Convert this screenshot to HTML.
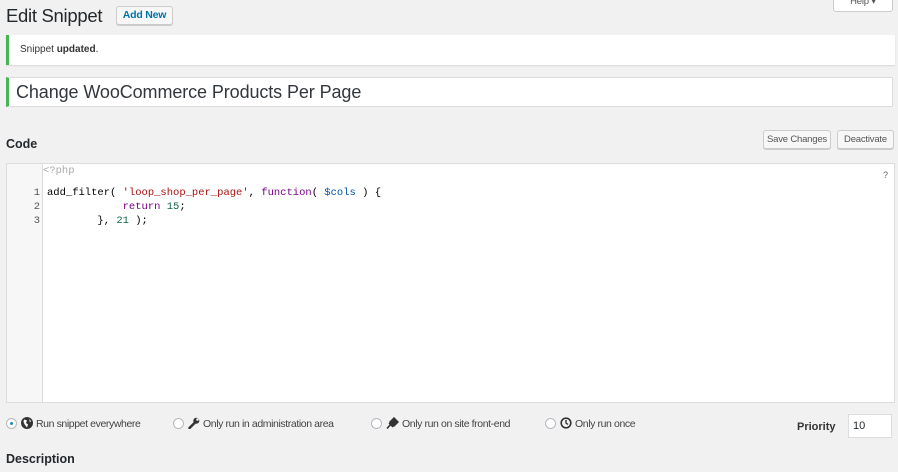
<!DOCTYPE html><html><head><style>
body{margin:0;background:#f1f1f1;font-family:"Liberation Sans",sans-serif;color:#23282d;width:898px;height:472px;overflow:hidden;position:relative}
.a{position:absolute}
.btn{position:absolute;background:#f7f7f7;border:1px solid #ccc;border-radius:3px;font-size:9.5px;color:#555;text-align:center;box-shadow:0 1px 0 #ccc;box-sizing:border-box;letter-spacing:-.2px}
.code{font-family:"Liberation Mono",monospace;font-size:10.5px;line-height:14px;white-space:pre}
.r{display:inline-block;width:11px;height:11px;border:1px solid #b4b9be;border-radius:50%;background:#fff;vertical-align:-2px;margin-right:4px;box-sizing:border-box;position:relative}
.opt{position:absolute;top:417px;font-size:10.5px;color:#444;letter-spacing:-.4px}
.opt svg{vertical-align:-2px;margin-right:3px}
</style></head><body>
<div class="a" style="left:6px;top:5px;font-size:18.5px;color:#23282d;letter-spacing:-.3px">Edit Snippet</div>
<div class="btn" style="left:116px;top:6px;width:57px;height:19px;font-size:10.5px;font-weight:bold;color:#0073aa;line-height:17px">Add New</div>
<div class="btn" style="left:833px;top:-6px;width:60px;height:18px;background:#fff;box-shadow:none;line-height:14px">Help ▾</div>
<div class="a" style="left:6px;top:35px;width:889px;height:30px;background:#fff;border-left:3px solid #46b450;box-sizing:border-box;box-shadow:0 1px 1px rgba(0,0,0,.1);font-size:10px;line-height:29px;padding-left:11px;color:#333">Snippet <b>updated</b>.</div>
<div class="a" style="left:6px;top:77px;width:887px;height:30px;background:#fff;border:1px solid #ddd;border-left:3px solid #46b450;box-sizing:border-box;font-size:18px;line-height:28px;padding-left:7px;color:#32373c;letter-spacing:-.1px">Change WooCommerce Products Per Page</div>
<div class="a" style="left:6px;top:137px;font-size:12.5px;font-weight:bold">Code</div>
<div class="btn" style="left:763px;top:130px;width:68px;height:19px;line-height:17px">Save Changes</div>
<div class="btn" style="left:837px;top:130px;width:57px;height:19px;line-height:17px">Deactivate</div>
<div class="a" style="left:6px;top:163px;width:889px;height:240px;background:#fff;border:1px solid #ddd;box-sizing:border-box">
<div class="a" style="left:0;top:0;width:35px;height:238px;background:#f7f7f7;border-right:1px solid #ddd"></div>
<div class="a code" style="left:0;width:33px;text-align:right;color:#555;top:22px">1
2
3</div>
<div class="a code" style="left:36px;top:0;color:#aaa">&lt;?php</div>
<div class="a code" style="left:40px;top:22px;color:#000">add_filter( <span style="color:#a11">'loop_shop_per_page'</span>, <span style="color:#708">function</span>( <span style="color:#05a">$cols</span> ) {
            <span style="color:#708">return</span> <span style="color:#164">15</span>;
        }, <span style="color:#164">21</span> );</div>
<div class="a" style="right:6px;top:6px;font-size:9px;color:#666">?</div>
</div>
<div class="opt" style="left:6px"><span class="r"><span class="a" style="left:3px;top:3px;width:3px;height:3px;border-radius:50%;background:#1e8cbe"></span></span><svg width="12" height="12" viewBox="0 0 12 12"><circle cx="6" cy="6" r="6" fill="#333"/><path d="M3 2.5 L6 3.5 L5 6 L7 7.5 L6 10.5 L4 8 L2.5 5Z M8 2 L10 4 L9 5.5Z" fill="#fff"/></svg>Run snippet everywhere</div>
<div class="opt" style="left:173px"><span class="r"></span><svg width="12" height="12" viewBox="0 0 12 12"><path d="M1.5 11 L6.5 6" stroke="#333" stroke-width="2.5" stroke-linecap="round"/><circle cx="8.3" cy="3.7" r="3" fill="#333"/><circle cx="9.5" cy="2.5" r="1.3" fill="#f1f1f1"/></svg>Only run in administration area</div>
<div class="opt" style="left:371px"><span class="r"></span><svg width="13" height="12" viewBox="0 0 13 12"><path d="M1 11.5 L5 7" stroke="#333" stroke-width="1.6"/><path d="M4 5 L8 1 L12 5 L8 9Z M3 6 L7 10" fill="#333" stroke="#333" stroke-width="1.5"/></svg>Only run on site front-end</div>
<div class="opt" style="left:545px"><span class="r"></span><svg width="12" height="12" viewBox="0 0 12 12"><circle cx="6" cy="6" r="4.8" fill="none" stroke="#333" stroke-width="1.6"/><path d="M6 3 V6 L8 7.5" fill="none" stroke="#333" stroke-width="1.4"/></svg>Only run once</div>
<div class="a" style="left:797px;top:421px;font-size:11px;font-weight:bold;color:#333">Priority</div>
<div class="a" style="left:848px;top:414px;width:44px;height:24px;background:#fff;border:1px solid #ddd;box-sizing:border-box;font-size:11px;line-height:22px;padding-left:4px">10</div>
<div class="a" style="left:6px;top:452px;font-size:12.5px;font-weight:bold">Description</div>
</body></html>
